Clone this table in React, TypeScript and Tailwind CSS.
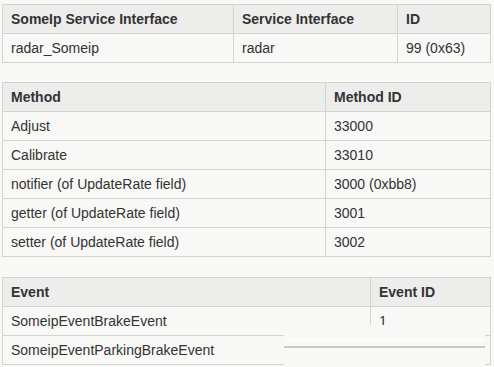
import React from "react";

type T = { headers: string[]; widths: number[]; rows: string[][] };

const tables: T[] = [
  {
    headers: ["SomeIp Service Interface", "Service Interface", "ID"],
    widths: [231, 164, 93],
    rows: [["radar_Someip", "radar", "99 (0x63)"]],
  },
  {
    headers: ["Method", "Method ID"],
    widths: [323, 165],
    rows: [
      ["Adjust", "33000"],
      ["Calibrate", "33010"],
      ["notifier (of UpdateRate field)", "3000 (0xbb8)"],
      ["getter (of UpdateRate field)", "3001"],
      ["setter (of UpdateRate field)", "3002"],
    ],
  },
  {
    headers: ["Event", "Event ID"],
    widths: [368, 120],
    rows: [
      ["SomeipEventBrakeEvent", "1"],
      ["SomeipEventParkingBrakeEvent", ""],
    ],
  },
];

function Table({ t, className }: { t: T; className: string }) {
  return (
    <table className={"table-fixed border-collapse w-[488px] ml-[2px] " + className}>
      <colgroup>
        {t.widths.map((w, i) => (
          <col key={i} style={{ width: w }} />
        ))}
      </colgroup>
      <thead>
        <tr className="bg-[#ededec]">
          {t.headers.map((h) => (
            <th
              key={h}
              className="border border-[#d3d3d1] px-2 py-1 text-left font-bold text-[14px] leading-5 text-[#333]"
            >
              {h}
            </th>
          ))}
        </tr>
      </thead>
      <tbody>
        {t.rows.map((r, i) => (
          <tr key={i}>
            {r.map((c, j) => (
              <td
                key={j}
                className="border border-[#d3d3d1] px-2 py-1 text-[14px] leading-5 text-[#333]"
              >
                {c}
              </td>
            ))}
          </tr>
        ))}
      </tbody>
    </table>
  );
}

export default function App() {
  return (
    <div
      className="relative w-[494px] h-[367px] overflow-hidden bg-[#f8f8f6] pt-1"
      style={{ fontFamily: '"Liberation Sans", Arial, sans-serif' }}
    >
      <Table t={tables[0]} className="" />
      <Table t={tables[1]} className="mt-[19px]" />
      <Table t={tables[2]} className="mt-5" />
      <div className="absolute left-[284px] top-[325px] w-[201px] h-[42px] bg-[#f8f8f6]">
        <div className="mt-[13px] h-[4px] bg-[#fbfbfa]" />
        <div className="mt-[4px] h-[2px] bg-[#c8c8c6]" />
      </div>
    </div>
  );
}
